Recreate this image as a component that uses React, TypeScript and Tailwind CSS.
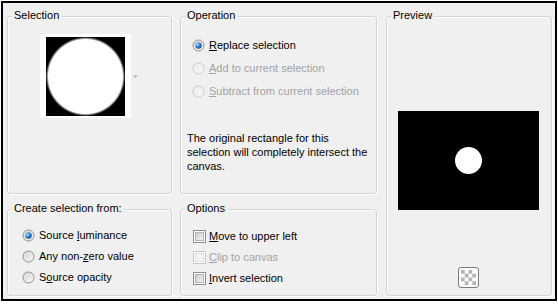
import React from "react";

function Radio({ checked = false, disabled = false }: { checked?: boolean; disabled?: boolean }) {
  const id = React.useId().replace(/:/g, "");
  return (
    <svg width="13" height="13" viewBox="0 0 13 13" className="shrink-0">
      <defs>
        <linearGradient id={`f${id}`} x1="0" y1="0" x2="1" y2="1">
          <stop offset="0" stopColor={disabled ? "#ececec" : "#cfcfcf"} />
          <stop offset="1" stopColor={disabled ? "#f7f7f7" : "#fbfbfb"} />
        </linearGradient>
        <radialGradient id={`d${id}`} cx="0.35" cy="0.35" r="0.75">
          <stop offset="0" stopColor="#b9e6ff" />
          <stop offset="0.45" stopColor="#3a8ad6" />
          <stop offset="1" stopColor="#0c3d7e" />
        </radialGradient>
      </defs>
      <circle cx="6.5" cy="6.5" r="5.5" fill={`url(#f${id})`} stroke={disabled ? "#c9c9c9" : "#8f8f8f"} strokeWidth="1" />
      <circle cx="6.5" cy="6.5" r="4" fill="none" stroke={disabled ? "#f4f4f4" : "#f0f0f0"} strokeWidth="0.8" opacity="0.7" />
      {checked && <circle cx="6.5" cy="6.5" r="3.2" fill={`url(#d${id})`} />}
    </svg>
  );
}

function Check({ disabled = false }: { disabled?: boolean }) {
  const id = React.useId().replace(/:/g, "");
  return (
    <svg width="13" height="13" viewBox="0 0 13 13" className="shrink-0">
      <defs>
        <linearGradient id={`c${id}`} x1="0" y1="0" x2="1" y2="1">
          <stop offset="0" stopColor={disabled ? "#ededed" : "#cbcbcb"} />
          <stop offset="1" stopColor={disabled ? "#f8f8f8" : "#f6f6f6"} />
        </linearGradient>
      </defs>
      <rect x="0.5" y="0.5" width="12" height="12" fill="#ffffff" stroke={disabled ? "#c9c9c9" : "#8f8f8f"} />
      <rect x="2.5" y="2.5" width="8" height="8" fill={`url(#c${id})`} stroke={disabled ? "#e3e3e3" : "#b4b4b4"} />
    </svg>
  );
}

function Group({
  title,
  className = "",
  children,
}: {
  title: string;
  className?: string;
  children?: React.ReactNode;
}) {
  return (
    <div
      className={`relative rounded-[3px] border border-[#d5d5d5] shadow-[inset_1px_1px_0_#ffffff,1px_1px_0_#ffffff] ${className}`}
    >
      <span className="absolute -top-[9px] left-[4px] bg-[#f0f0f0] px-[2px] leading-[14px] text-black">
        {title}
      </span>
      {children}
    </div>
  );
}

function U({ children }: { children: React.ReactNode }) {
  return <span className="underline decoration-1 underline-offset-[1px]">{children}</span>;
}

export default function App() {
  return (
    <div
      className="w-[558px] h-[304px] bg-white pt-[1px] pl-[1px] text-[11px] text-black"
      style={{ fontFamily: '"Liberation Sans", Arial, sans-serif' }}
    >
      <div className="w-[556px] h-[300px] border-2 border-black bg-[#f0f0f0] pl-[4px] pt-[13px]">
        <div className="grid grid-cols-[165px_8px_197px_9px_166px] grid-rows-[178px_87px] gap-y-[15px]">
          {/* Selection */}
          <Group title="Selection" className="col-start-1 row-start-1 flex items-start pl-[32px] pt-[17px]">
            <div className="w-[91px] h-[84px] bg-white pl-[6px] pt-[3px]">
              <div className="w-[79px] h-[79px] bg-[radial-gradient(circle,#ffffff_37px,#000000_39.5px)]" />
            </div>
            <svg width="5" height="4" viewBox="0 0 5 4" className="ml-[2px] mt-[41px]">
              <path d="M0 0.5 L5 0.5 L2.5 3 Z" fill="#b0b0b0" />
            </svg>
          </Group>

          {/* Operation */}
          <Group title="Operation" className="col-start-3 row-start-1 flex flex-col pl-[6px] pt-[17px]">
            <div className="ml-[5px] flex flex-col">
              <div className="flex h-[23px] items-center gap-[4px]">
                <Radio checked />
                <span>
                  <U>R</U>eplace selection
                </span>
              </div>
              <div className="flex h-[23px] items-center gap-[4px] text-[#a3a3a3]">
                <Radio disabled />
                <span>
                  <U>A</U>dd to current selection
                </span>
              </div>
              <div className="flex h-[23px] items-center gap-[4px] text-[#a3a3a3]">
                <Radio disabled />
                <span>
                  <U>S</U>ubtract from current selection
                </span>
              </div>
            </div>
            <p className="mt-[28px] leading-[14px]">
              The original rectangle for this
              <br />
              selection will completely intersect the
              <br />
              canvas.
            </p>
          </Group>

          {/* Preview */}
          <Group
            title="Preview"
            className="col-start-5 row-span-2 row-start-1 flex flex-col pl-[11px] pt-[94px] pb-[7px]"
          >
            <div className="flex w-[141px] flex-col items-center h-full">
              <div className="flex h-[99px] w-[141px] items-center justify-center bg-black">
                <div className="h-[27px] w-[27px] rounded-full bg-white" />
              </div>
              <div className="mt-auto flex h-[21px] w-[21px] items-center justify-center rounded-[3px] border border-[#7a7a7a] bg-[#fbfbfb]">
                <svg width="15" height="15" viewBox="0 0 15 15">
                  <rect width="15" height="15" fill="#ffffff" />
                  {[0, 1, 2, 3].map((r) =>
                    [0, 1, 2, 3].map((c) =>
                      (r + c) % 2 === 0 ? (
                        <rect key={`${r}-${c}`} x={c * 3.75} y={r * 3.75} width="3.75" height="3.75" fill="#b5b5b5" />
                      ) : null
                    )
                  )}
                </svg>
              </div>
            </div>
          </Group>

          {/* Create selection from */}
          <Group title="Create selection from:" className="col-start-1 row-start-2 flex flex-col pl-[14px] pt-[15px]">
            <div className="flex h-[21px] items-center gap-[4px]">
              <Radio checked />
              <span>
                Source <U>l</U>uminance
              </span>
            </div>
            <div className="flex h-[21px] items-center gap-[4px]">
              <Radio />
              <span>
                Any non-<U>z</U>ero value
              </span>
            </div>
            <div className="flex h-[21px] items-center gap-[4px]">
              <Radio />
              <span>
                S<U>o</U>urce opacity
              </span>
            </div>
          </Group>

          {/* Options */}
          <Group title="Options" className="col-start-3 row-start-2 flex flex-col pl-[12px] pt-[16px]">
            <div className="flex h-[21px] items-center gap-[3px]">
              <Check />
              <span>
                <U>M</U>ove to upper left
              </span>
            </div>
            <div className="flex h-[21px] items-center gap-[3px] text-[#a3a3a3]">
              <Check disabled />
              <span>
                <U>C</U>lip to canvas
              </span>
            </div>
            <div className="flex h-[21px] items-center gap-[3px]">
              <Check />
              <span>
                <U>I</U>nvert selection
              </span>
            </div>
          </Group>
        </div>
      </div>
    </div>
  );
}
